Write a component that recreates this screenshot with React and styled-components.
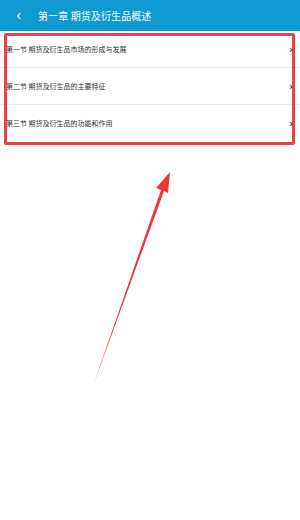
import React from "react";
import styled, { createGlobalStyle } from "styled-components";

const Global = createGlobalStyle`
  html, body { margin: 0; padding: 0; background: #fff; }
  body { font-family: "Noto Sans CJK SC", "Noto Sans", sans-serif; }
`;

const Page = styled.div`
  position: relative;
  width: 300px;
  height: 520px;
  background: #fff;
  overflow: hidden;
`;

const Header = styled.div`
  height: 31px;
  background: #0f9ad2;
  display: flex;
  align-items: center;
  color: #fff;
`;

const Back = styled.div`
  width: 38px;
  display: flex;
  justify-content: center;
  line-height: 1;
`;

const Title = styled.div`
  font-size: 10px;
  letter-spacing: 0.1px;
`;

const List = styled.div`
  display: flex;
  flex-direction: column;
`;

const Row = styled.div`
  height: 36px;
  display: flex;
  align-items: center;
  justify-content: space-between;
  padding: 0 7px 0 6px;
  border-bottom: 1px solid ${(p) => (p.$last ? "transparent" : "#ececec")};
  font-size: 7px;
  color: #333;
`;

const Chevron = styled.span`
  position: relative;
  z-index: 2;
  font-family: "DejaVu Sans", sans-serif;
  font-size: 10px;
  font-weight: bold;
  color: #444;
`;

const Highlight = styled.div`
  position: absolute;
  z-index: 1;
  left: 4px;
  top: 33px;
  width: 285px;
  height: 106px;
  border: 3px solid #ef3f47;
  border-radius: 2px;
  pointer-events: none;
`;

const ArrowSvg = styled.svg`
  position: absolute;
  left: 0;
  top: 0;
`;

const items = [
  "第一节 期货及衍生品市场的形成与发展",
  "第二节 期货及衍生品的主要特征",
  "第三节 期货及衍生品的功能和作用",
];

export default function App() {
  return (
    <Page>
      <Global />
      <Header>
        <Back>
          <svg width="6" height="8" viewBox="0 0 6 8">
            <path d="M4.3 1.2 L1.6 4 L4.3 6.8" fill="none" stroke="#fff" strokeWidth="1.1" />
          </svg>
        </Back>
        <Title>第一章 期货及衍生品概述</Title>
      </Header>
      <List>
        {items.map((t, i) => (
          <Row key={i} $last={i === items.length - 1}>
            <span>{t}</span>
            <Chevron>›</Chevron>
          </Row>
        ))}
      </List>
      <Highlight />
      <ArrowSvg width="300" height="520" viewBox="0 0 300 520">
        <polygon
          points="93,386 161,190 156,188 170,172 168,193 164,191"
          fill="#ee3338"
        />
      </ArrowSvg>
    </Page>
  );
}
